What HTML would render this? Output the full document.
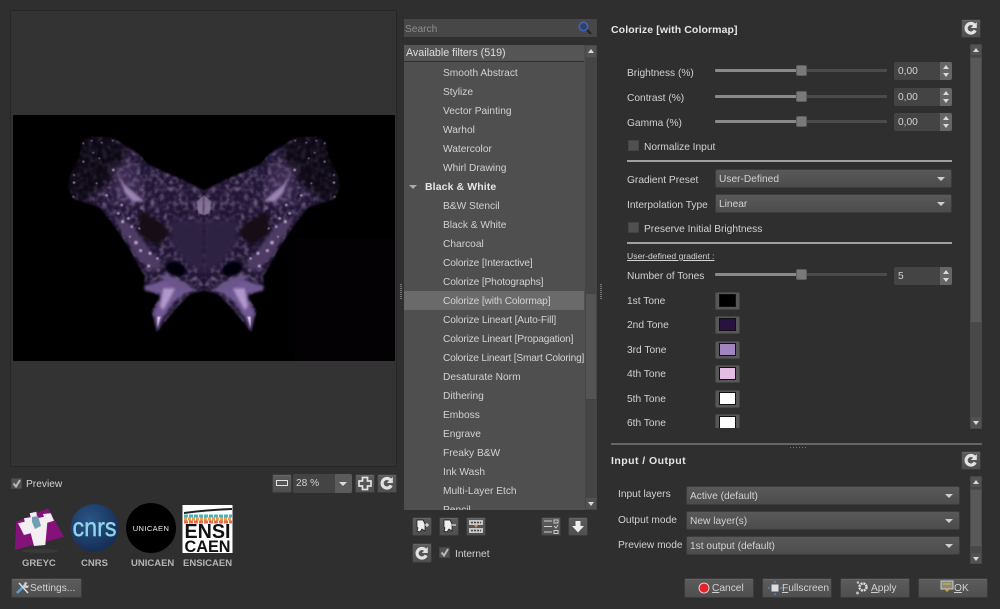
<!DOCTYPE html>
<html><head><meta charset="utf-8">
<style>
html,body{margin:0;padding:0;background:#2f2f2f}
#p{position:relative;width:1000px;height:609px;overflow:hidden;background:#2f2f2f;font-family:"Liberation Sans",sans-serif;font-size:10.2px;color:#d2d2d2}
#p div,#p span.a,#p svg.a{position:absolute;box-sizing:border-box}
.t{white-space:nowrap;height:14px;line-height:14px;margin-top:2px}
.b{font-weight:bold;color:#e6e6e6;font-size:10.5px;letter-spacing:.1px;margin-top:1px}
.c{letter-spacing:-.15px}
.btn{background:linear-gradient(#5c5c5c,#4f4f4f);border:1px solid #3b3b3b;border-radius:2px;box-shadow:inset 0 1px 0 #666}
.cb{width:11px;height:11px;background:#505050;border:1px solid #444}
.combo{background:linear-gradient(#595959,#4c4c4c);border:1px solid #3c3c3c;border-radius:2px;height:19px;line-height:19px;padding-left:3px;white-space:nowrap}
.combo i{position:absolute;right:6px;top:7px;width:0;height:0;border-left:4px solid transparent;border-right:4px solid transparent;border-top:4px solid #cfcfcf}
.tr1{height:3px;background:#8a8a8a;border-radius:1px}
.tr2{height:3px;background:#4b4b4b}
.hd{width:11px;height:11px;background:#7a7a7a;border:1px solid #5f5f5f;border-radius:2px}
.spin{background:#444;width:58px;height:18px;line-height:19px;padding-left:4px;border-radius:2px}
.spin b{position:absolute;right:0;top:0;width:12px;height:18px;background:#666;border-radius:0 2px 2px 0}
.sbb{width:12px;background:#525252;border:1px solid #474747}
.up:after,.dn:after{content:"";position:absolute;left:2px;width:0;height:0;border-left:3px solid transparent;border-right:3px solid transparent}
.up:after{top:3px;border-bottom:4px solid #d8d8d8}
.dn:after{top:4px;border-top:4px solid #d8d8d8}
.sw{width:25px;height:18px;background:#575757;border:1px solid #454545;border-radius:2px}
.sw i{position:absolute;left:3px;top:1px;width:15px;height:11px;border:1px solid #111;box-sizing:content-box}
.sep{height:2px;background:#a0a0a0}
.r{left:443px}
.ds{width:2px;height:15px;background:repeating-linear-gradient(#777 0 1px,transparent 1px 2px)}
.lg{font-weight:bold;font-size:9.500px;color:#b4b4b4;top:555px}
</style></head><body><div id="p">
<svg width="0" height="0" style="position:absolute"><defs>
<symbol id="rf" viewBox="0 0 20 19"><path d="M14.200 11.400a4.800 4.800 0 1 1-.6-5.200" fill="none" stroke="#e2e2e2" stroke-width="3.200"/><path d="M15.800 3v6h-6z" fill="#e2e2e2"/></symbol>
<filter id="bl"><feGaussianBlur stdDeviation="4"/></filter>
<filter id="bl2"><feGaussianBlur stdDeviation="9"/></filter>
<filter id="bl3"><feGaussianBlur stdDeviation="1.800"/></filter>
<filter id="sp" x="0" y="0" width="100%" height="100%"><feTurbulence type="fractalNoise" baseFrequency="0.07" numOctaves="2" seed="4"/><feColorMatrix values="0 0 0 0 .40 0 0 0 0 .30 0 0 0 0 .52 1.500 0 0 0 -.66"/><feComposite in2="SourceAlpha" operator="in"/><feGaussianBlur stdDeviation="2.500"/></filter>
<g id="wing">
<path d="M462 212L400 180 340 155 290 130 265 100 230 80 190 55 130 50 95 65 90 110 62 165 55 205 70 235 150 262 195 320 235 380 262 430 285 470 282 498 330 530 305 572 320 636 372 572 420 522 462 512z" fill="#241634" filter="url(#bl)"/>
<path d="M462 212L400 180 340 155 290 130 265 100 230 80 190 55 130 50 95 65 90 110 62 165 55 205 70 235 150 262 195 320 235 380 262 430 285 470 282 498 330 530 305 572 320 636 372 572 420 522 462 512z" filter="url(#sp)"/>
<path d="M85 45L190 45 230 100 190 170 110 240 45 235 50 160z" fill="#000" opacity=".6" filter="url(#bl2)"/>
<path d="M175 130L250 130 290 230 240 260 200 250z" fill="#6f5589" opacity=".3" filter="url(#bl2)"/>
<path d="M205 165L225 195 285 245 250 245 225 220z" fill="#9a82b2" filter="url(#bl)"/>
<path d="M445 280L440 245 462 225 462 285z" fill="#a590b8" opacity=".7" filter="url(#bl3)"/>
<path d="M270 270L265 340 320 380 360 340 340 310z" fill="#120818" filter="url(#bl)"/>
<path d="M360 300H462V460L410 430 370 380z" fill="#2f2143" filter="url(#bl2)"/>
<path d="M190 290L240 310 300 390 340 440 300 450 260 410z" fill="#4d3a63" filter="url(#bl)"/>
<g fill="#a892bd" filter="url(#bl3)">
<circle cx="205" cy="280" r="4"/><circle cx="218" cy="305" r="5"/><circle cx="235" cy="295" r="4"/><circle cx="240" cy="350" r="3"/><circle cx="258" cy="368" r="6"/><circle cx="272" cy="392" r="5"/><circle cx="300" cy="400" r="5"/><circle cx="296" cy="438" r="5"/><circle cx="322" cy="415" r="4"/><circle cx="268" cy="325" r="3"/><circle cx="245" cy="320" r="4"/>
<circle cx="72" cy="188" r="3.500"/><circle cx="100" cy="125" r="3"/><circle cx="130" cy="98" r="2.500"/><circle cx="170" cy="226" r="4"/><circle cx="190" cy="150" r="4"/><circle cx="72" cy="165" r="2.500"/><circle cx="148" cy="115" r="2.500"/><circle cx="140" cy="190" r="2.500"/><circle cx="70" cy="230" r="2.500"/><circle cx="215" cy="255" r="4"/><circle cx="100" cy="70" r="2.500"/><circle cx="125" cy="62" r="2.500"/><circle cx="155" cy="68" r="2.500"/><circle cx="188" cy="62" r="2.500"/>
</g>
<ellipse cx="378" cy="446" rx="32" ry="21" transform="rotate(20 378 446)" fill="#050207" filter="url(#bl)"/>
<path d="M282 500L345 478 385 484 440 510 400 522 372 545 340 590 322 632 310 575 332 535 330 522 285 512z" fill="#705892" filter="url(#bl)"/>
<path d="M320 470L350 462 410 490 420 510 380 510 345 480z" fill="#6b5588" filter="url(#bl)"/>
<path d="M340 505L375 505 360 535 340 570 330 560z" fill="#b097ca" filter="url(#bl)"/>
<path d="M322 590L332 590 322 622z" fill="#d8cce4" filter="url(#bl3)"/>
</g>
</defs></svg>

<!-- preview -->
<div style="left:10px;top:10px;width:387px;height:457px;background:#333;border:1px solid #262626"></div>
<svg class="a" style="left:13px;top:115px" width="382" height="246"><rect width="382" height="246" fill="#000"/><rect x="282" y="123" width="100" height="123" fill="#030104"/>
<g transform="translate(37,5) scale(.33333)"><use href="#wing"/><use href="#wing" transform="translate(924,0) scale(-1,1)"/></g></svg>

<div class="cb" style="left:11px;top:478px"></div>
<svg class="a" style="left:11px;top:478px" width="11" height="11"><path d="M2.500 5.500L5 8.500 9 2" fill="none" stroke="#b8b8b8" stroke-width="2"/></svg>
<div class="t" style="left:26px;top:476px">Preview</div>
<div class="btn" style="left:272px;top:474px;width:20px;height:19px"></div>
<div style="left:276px;top:480px;width:12px;height:6px;border:1.500px solid #e2e2e2"></div>
<div style="left:293px;top:474px;width:59px;height:19px;background:#444;border-radius:2px;line-height:19px;padding-left:3px">28 %</div>
<div style="left:335px;top:474px;width:17px;height:19px;background:#5b5b5b;border-radius:0 2px 2px 0"></div>
<div style="left:339px;top:482px;border-left:4px solid transparent;border-right:4px solid transparent;border-top:4px solid #ddd"></div>
<div class="btn" style="left:355px;top:474px;width:20px;height:19px"></div>
<svg class="a" style="left:355px;top:474px" width="20" height="19"><path d="M7.500 3.500h5V7H16v5h-3.500v3.500h-5V12H4V7h3.500z" fill="none" stroke="#e2e2e2" stroke-width="1.700"/></svg>
<div class="btn" style="left:377px;top:474px;width:20px;height:19px"></div>
<svg class="a" style="left:377px;top:474px" width="20" height="19"><use href="#rf"/></svg>

<!-- logos -->
<svg class="a" style="left:12px;top:503px" width="226" height="54">
<path d="M36 5.300L52 33.700 2.700 47 4.300 18.700z" fill="#85127a"/>
<path d="M17.700 10.300L24.300 8.700 25.300 15.300 32 13.700 31 11 38.700 10.300 42 17.700 35.300 19.700 33.300 42 22 43 18.700 30.300 12 32 6 20.300 12.700 18.700 12 15.300 18.700 14.300z" fill="#f2eef2"/>
<path d="M20 14l6-1 3 10-6 3-3-7z" fill="#6f9fb0"/>
<ellipse cx="28" cy="48" rx="18" ry="2" fill="#3a3a3a"/>
<defs><radialGradient id="cn" cx=".4" cy=".35" r=".75"><stop offset="0" stop-color="#2a5688"/><stop offset="1" stop-color="#12294e"/></radialGradient></defs>
<circle cx="82.500" cy="25" r="24" fill="url(#cn)"/>
<text x="82.500" y="33" text-anchor="middle" font-family="Liberation Sans" font-size="26" fill="#8fd6ec" stroke="#8fd6ec" stroke-width=".4" textLength="44" lengthAdjust="spacingAndGlyphs">cnrs</text>
<circle cx="139" cy="25" r="25" fill="#000"/>
<text x="139" y="28" text-anchor="middle" font-family="Liberation Sans" font-size="7.500" letter-spacing=".4" fill="#eee">UNICAEN</text>
<rect x="170.500" y="2" width="50" height="48" fill="#fff"/>
<path d="M172 9q22-3 48-4v2q-26 1-48 4z" fill="#222"/>
<g stroke-width="3"><path d="M172 13h48" stroke="#45b4c9" stroke-dasharray="4 1"/><path d="M172 16h48" stroke="#e9a24b" stroke-dasharray="3 1"/><path d="M172 19h48" stroke="#e46a5a" stroke-dasharray="4 1"/></g>
<text x="195.500" y="35" text-anchor="middle" font-family="Liberation Sans" font-weight="bold" font-size="20" fill="#111" textLength="46" lengthAdjust="spacingAndGlyphs">ENSI</text>
<text x="195.500" y="49" text-anchor="middle" font-family="Liberation Sans" font-weight="bold" font-size="16.500" fill="#111" textLength="46" lengthAdjust="spacingAndGlyphs">CAEN</text>
</svg>
<div class="t lg" style="left:22px">GREYC</div>
<div class="t lg" style="left:81px">CNRS</div>
<div class="t lg" style="left:131px">UNICAEN</div>
<div class="t lg" style="left:183px">ENSICAEN</div>
<div class="btn" style="left:11px;top:578px;width:71px;height:20px"></div>
<svg class="a" style="left:15px;top:580px" width="15" height="15"><path d="M2 13L9 6" stroke="#5e9fd0" stroke-width="2.500"/><path d="M13 13L4 3" stroke="#ddd" stroke-width="1.500"/><path d="M8 6l2-4 3 1-2 1 1 2 2-1-1 3-3 0z" fill="#cfcfcf"/></svg>
<div class="t" style="left:30px;top:580px">Settings...</div>

<!-- splitters -->
<div class="ds" style="left:400px;top:284px"></div>
<div class="ds" style="left:600px;top:284px"></div>

<!-- search/list -->
<div style="left:404px;top:19px;width:193px;height:18px;background:#474747;padding-left:1px;line-height:21px;color:#8e8e8e">Search</div>
<svg class="a" style="left:577px;top:20px" width="16" height="16"><circle cx="6.500" cy="6.500" r="4.200" fill="#33415f" stroke="#3d62c8" stroke-width="1.600"/><path d="M10 10l4 4" stroke="#222" stroke-width="2"/></svg>
<div style="left:404px;top:45px;width:193px;height:465px;background:#4f4f4f;overflow:hidden">
<div style="left:0;top:0;width:180px;height:17px;background:#555;border-bottom:1px solid #2f2f2f;line-height:17px;padding-left:2px;font-size:10.700px;color:#dedede">Available filters (519)</div>
<div style="left:181px;top:0;width:12px;height:465px;background:#454545"></div>
<div style="left:0;top:246px;width:180px;height:19px;background:#6a6a6a"></div>
<div style="left:181px;top:248px;width:12px;height:107px;background:#545454;border:1px solid #444"></div>
<div class="sbb up" style="left:181px;top:0;height:13px"></div>
<div class="sbb dn" style="left:181px;top:452px;height:13px"></div>
</div>
<div class="t r" style="top:65px">Smooth Abstract</div>
<div class="t r" style="top:84px">Stylize</div>
<div class="t r" style="top:103px">Vector Painting</div>
<div class="t r" style="top:122px">Warhol</div>
<div class="t r" style="top:141px">Watercolor</div>
<div class="t r" style="top:160px">Whirl Drawing</div>
<div style="left:409px;top:185px;border-left:4px solid transparent;border-right:4px solid transparent;border-top:4px solid #aaa"></div>
<div class="t b" style="left:425px;top:179px">Black &amp; White</div>
<div class="t r" style="top:198px">B&amp;W Stencil</div>
<div class="t r" style="top:217px">Black &amp; White</div>
<div class="t r" style="top:236px">Charcoal</div>
<div class="t r c" style="top:255px">Colorize [Interactive]</div>
<div class="t r c" style="top:274px">Colorize [Photographs]</div>
<div class="t r c" style="top:293px">Colorize [with Colormap]</div>
<div class="t r c" style="top:312px">Colorize Lineart [Auto-Fill]</div>
<div class="t r c" style="top:331px">Colorize Lineart [Propagation]</div>
<div class="t r" style="top:350px;letter-spacing:-.2px">Colorize Lineart [Smart Coloring]</div>
<div class="t r" style="top:369px">Desaturate Norm</div>
<div class="t r" style="top:388px">Dithering</div>
<div class="t r" style="top:407px">Emboss</div>
<div class="t r" style="top:426px">Engrave</div>
<div class="t r" style="top:445px">Freaky B&amp;W</div>
<div class="t r" style="top:464px">Ink Wash</div>
<div class="t r" style="top:483px">Multi-Layer Etch</div>
<div style="left:443px;top:504px;width:40px;height:6px;overflow:hidden;line-height:14px;margin:0">Pencil</div>

<!-- tool buttons -->
<div class="btn" style="left:412px;top:517px;width:20px;height:19px"></div>
<svg class="a" style="left:412px;top:517px" width="20" height="19"><path d="M5 3h6l2 4v7l-3-2-2 3-3-1 1-3-1-1z" fill="#eee" stroke="#111" stroke-width=".7"/><path d="M13 8h4M15 6v4" stroke="#ddd" stroke-width="1.300"/></svg>
<div class="btn" style="left:439px;top:517px;width:20px;height:19px"></div>
<svg class="a" style="left:439px;top:517px" width="20" height="19"><path d="M5 3h6l2 4v7l-3-2-2 3-3-1 1-3-1-1z" fill="#eee" stroke="#111" stroke-width=".7"/><path d="M13 8h4" stroke="#ddd" stroke-width="1.300"/></svg>
<div class="btn" style="left:466px;top:517px;width:20px;height:19px"></div>
<svg class="a" style="left:466px;top:517px" width="20" height="19"><rect x="3" y="3" width="14" height="5" fill="#c8c8c8"/><rect x="3" y="11" width="14" height="5" fill="#c8c8c8"/><path d="M5 5.500h10M5 13.500h10" stroke="#444" stroke-width="1.500" stroke-dasharray="2 1"/><path d="M8 8h4l-2 3z" fill="#e98b2a"/></svg>
<div class="btn" style="left:541px;top:517px;width:20px;height:19px"></div>
<svg class="a" style="left:541px;top:517px" width="20" height="19"><path d="M3 4h8M3 9.500h8M3 15h8" stroke="#ccc" stroke-width="1"/><path d="M13 3h4v3h-4zM13 13.500h4v3h-4z" fill="none" stroke="#ccc"/><path d="M13 9l2 2 2-3" fill="none" stroke="#ccc"/></svg>
<div class="btn" style="left:568px;top:517px;width:20px;height:19px"></div>
<svg class="a" style="left:568px;top:517px" width="20" height="19"><path d="M7.500 4h5v5h3.500L10 15.500 4 9h3.500z" fill="#eee"/></svg>
<div class="btn" style="left:412px;top:543px;width:20px;height:20px"></div>
<svg class="a" style="left:412px;top:544px" width="20" height="19"><use href="#rf"/></svg>
<div class="cb" style="left:439px;top:547px"></div>
<svg class="a" style="left:439px;top:547px" width="11" height="11"><path d="M2.500 5.500L5 8.500 9 2" fill="none" stroke="#b8b8b8" stroke-width="2"/></svg>
<div class="t" style="left:455px;top:546px">Internet</div>

<!-- right header -->
<div class="t b" style="left:611px;top:22px">Colorize [with Colormap]</div>
<div class="btn" style="left:961px;top:19px;width:20px;height:19px"></div>
<svg class="a" style="left:961px;top:19px" width="20" height="19"><use href="#rf"/></svg>
<div style="left:970px;top:44px;width:12px;height:385px;background:#484848"></div>
<div style="left:970px;top:57px;width:12px;height:266px;background:#595959;border:1px solid #4a4a4a"></div>
<div class="sbb up" style="left:970px;top:44px;height:12px"></div>
<div class="sbb dn" style="left:970px;top:416px;height:13px"></div>

<div class="t" style="left:627px;top:65px">Brightness (%)</div>
<div class="tr1" style="left:715px;top:69px;width:82px"></div><div class="tr2" style="left:806px;top:69px;width:81px"></div><div class="hd" style="left:796px;top:65px"></div>
<div class="spin" style="left:894px;top:62px">0,00<b></b></div>
<div class="t" style="left:627px;top:90px">Contrast (%)</div>
<div class="tr1" style="left:715px;top:95px;width:82px"></div><div class="tr2" style="left:806px;top:95px;width:81px"></div><div class="hd" style="left:796px;top:91px"></div>
<div class="spin" style="left:894px;top:88px">0,00<b></b></div>
<div class="t" style="left:627px;top:115px">Gamma (%)</div>
<div class="tr1" style="left:715px;top:120px;width:82px"></div><div class="tr2" style="left:806px;top:120px;width:81px"></div><div class="hd" style="left:796px;top:116px"></div>
<div class="spin" style="left:894px;top:113px">0,00<b></b></div>
<svg class="a" style="left:940px;top:62px" width="12" height="240"><g fill="#d8d8d8"><path d="M6 3l3 4H3zM6 15l3-4H3zM6 29l3 4H3zM6 41l3-4H3zM6 54l3 4H3zM6 66l3-4H3z"/></g></svg>
<div class="cb" style="left:628px;top:140px"></div>
<div class="t" style="left:644px;top:139px">Normalize Input</div>
<div class="sep" style="left:627px;top:160px;width:325px"></div>
<div class="t" style="left:627px;top:172px">Gradient Preset</div>
<div class="combo" style="left:715px;top:169px;width:237px;line-height:20px">User-Defined<i></i></div>
<div class="t" style="left:627px;top:197px">Interpolation Type</div>
<div class="combo" style="left:715px;top:194px;width:237px;line-height:20px">Linear<i></i></div>
<div class="cb" style="left:628px;top:222px"></div>
<div class="t" style="left:644px;top:221px">Preserve Initial Brightness</div>
<div class="sep" style="left:627px;top:242px;width:325px"></div>
<div class="t" style="left:627px;top:247px;font-size:8.600px;text-decoration:underline">User-defined gradient :</div>
<div class="t" style="left:627px;top:268px">Number of Tones</div>
<div class="tr1" style="left:715px;top:273px;width:82px"></div><div class="tr2" style="left:806px;top:273px;width:81px"></div><div class="hd" style="left:796px;top:269px"></div>
<div class="spin" style="left:894px;top:267px">5<b></b></div>
<svg class="a" style="left:940px;top:267px" width="12" height="18"><path d="M6 3l3 4H3zM6 15l3-4H3z" fill="#d8d8d8"/></svg>

<div class="t" style="left:627px;top:293px">1st Tone</div><div class="sw" style="left:715px;top:292px"><i style="background:#000"></i></div>
<div class="t" style="left:627px;top:317px">2nd Tone</div><div class="sw" style="left:715px;top:316px"><i style="background:#2a1240"></i></div>
<div class="t" style="left:627px;top:342px">3rd Tone</div><div class="sw" style="left:715px;top:341px"><i style="background:#a085c0"></i></div>
<div class="t" style="left:627px;top:366px">4th Tone</div><div class="sw" style="left:715px;top:365px"><i style="background:#e3bde3"></i></div>
<div class="t" style="left:627px;top:391px">5th Tone</div><div class="sw" style="left:715px;top:390px"><i style="background:#fff"></i></div>
<div class="t" style="left:627px;top:415px">6th Tone</div>
<div style="left:715px;top:414px;width:25px;height:14px;overflow:hidden"><div class="sw" style="left:0;top:0"><i style="background:#fff"></i></div></div>

<!-- IO -->
<div style="left:611px;top:443px;width:371px;height:2px;background:#666"></div>
<div style="left:790px;top:447px;width:16px;height:1px;background:repeating-linear-gradient(90deg,#777 0 1px,transparent 1px 3px)"></div>
<div class="t b" style="left:611px;top:453px;letter-spacing:.45px">Input / Output</div>
<div class="btn" style="left:961px;top:451px;width:20px;height:19px"></div>
<svg class="a" style="left:961px;top:451px" width="20" height="19"><use href="#rf"/></svg>
<div style="left:970px;top:476px;width:12px;height:88px;background:#484848"></div>
<div style="left:970px;top:489px;width:12px;height:58px;background:#595959;border:1px solid #4a4a4a"></div>
<div class="sbb up" style="left:970px;top:476px;height:12px"></div>
<div class="sbb dn" style="left:970px;top:552px;height:12px"></div>
<div class="t" style="left:618px;top:486px">Input layers</div>
<div class="combo" style="left:686px;top:486px;width:274px">Active (default)<i></i></div>
<div class="t" style="left:618px;top:512px">Output mode</div>
<div class="combo" style="left:686px;top:511px;width:274px">New layer(s)<i></i></div>
<div class="t" style="left:618px;top:537px">Preview mode</div>
<div class="combo" style="left:686px;top:536px;width:274px">1st output (default)<i></i></div>

<!-- bottom buttons -->
<div class="btn" style="left:684px;top:578px;width:70px;height:20px"></div>
<svg class="a" style="left:698px;top:582px" width="12" height="12"><circle cx="6" cy="6" r="5" fill="#e8202a" stroke="#eee" stroke-width=".8"/></svg>
<div class="t" style="left:712px;top:580px"><u>C</u>ancel</div>
<div class="btn" style="left:762px;top:578px;width:70px;height:20px"></div>
<svg class="a" style="left:767px;top:580px" width="16" height="16"><rect x="4.500" y="4.500" width="7" height="7" fill="#ddd"/><path d="M8 .5l1.500 2h-3zM8 15.500l1.500-2h-3zM.5 8l2-1.500v3zM15.500 8l-2-1.500v3z" fill="#4a90d8"/></svg>
<div class="t" style="left:782px;top:580px"><u>F</u>ullscreen</div>
<div class="btn" style="left:840px;top:578px;width:70px;height:20px"></div>
<svg class="a" style="left:855px;top:580px" width="15" height="16"><circle cx="8" cy="7" r="3.500" fill="none" stroke="#ddd" stroke-width="2.500" stroke-dasharray="2 .8"/><circle cx="3" cy="2.500" r="1.300" fill="#bbb"/><circle cx="2.500" cy="13" r="1.500" fill="#bbb"/></svg>
<div class="t" style="left:871px;top:580px"><u>A</u>pply</div>
<div class="btn" style="left:918px;top:578px;width:70px;height:20px"></div>
<svg class="a" style="left:940px;top:580px" width="14" height="15"><rect x="1" y="1" width="12" height="8" fill="#8b8b70" stroke="#ccc"/><path d="M4 9h6l-3 3z" fill="#e59b25"/><path d="M3 4h8" stroke="#d8b56a"/></svg>
<div class="t" style="left:954px;top:580px"><u>O</u>K</div>
</div></body></html>
